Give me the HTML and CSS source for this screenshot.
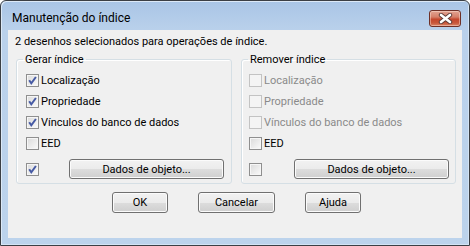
FILE: index.html
```html
<!DOCTYPE html>
<html lang="pt">
<head>
    <meta charset="UTF-8">
    <title>Manutenção do índice</title>
    <link rel="stylesheet" href="styles.css">
</head>
<body>

    <div class="window">
        <div class="titlebar">
            <span class="title">Manutenção do índice</span>
            <button class="close" title="Fechar">
                <svg width="15" height="11" viewBox="0 0 15 11">
                    <path d="M3 2 L12 9 M12 2 L3 9" stroke="#5b3a36" stroke-width="4.4" stroke-linecap="round"/>
                    <path d="M3 2 L12 9 M12 2 L3 9" stroke="#fff" stroke-width="2.6" stroke-linecap="round"/>
                </svg>
            </button>
        </div>

        <div class="client">
            <p class="info">2 desenhos selecionados para operações de índice.</p>

            <div class="groups">
                <fieldset class="group">
                    <legend>Gerar índice</legend>
                    <div class="group-body">
                        <div class="row"><span class="cb on"></span>Localização</div>
                        <div class="row"><span class="cb on"></span>Propriedade</div>
                        <div class="row"><span class="cb on"></span>Vínculos do banco de dados</div>
                        <div class="row"><span class="cb"></span>EED</div>
                        <div class="row row-data"><span class="cb on"></span><button class="btn btn-data">Dados de objeto...</button></div>
                    </div>
                </fieldset>

                <fieldset class="group group-right">
                    <legend>Remover índice</legend>
                    <div class="group-body">
                        <div class="row disabled"><span class="cb"></span>Localização</div>
                        <div class="row disabled"><span class="cb"></span>Propriedade</div>
                        <div class="row disabled"><span class="cb"></span>Vínculos do banco de dados</div>
                        <div class="row"><span class="cb"></span>EED</div>
                        <div class="row row-data"><span class="cb"></span><button class="btn btn-data">Dados de objeto...</button></div>
                    </div>
                </fieldset>
            </div>

            <div class="actions">
                <button class="btn btn-ok">OK</button>
                <button class="btn btn-cancel">Cancelar</button>
                <button class="btn btn-ok">Ajuda</button>
            </div>
        </div>
    </div>

</body>
</html>
```

FILE: styles.css
```css
* {
    box-sizing: border-box;
}

body {
    margin: 0;
    background-color: #fff;
    font-family: Roboto, 'Segoe UI', sans-serif;
    font-size: 11px;
    color: #000;
}

.window {
    width: 470px;
    height: 246px;
    display: flex;
    flex-direction: column;
    padding: 0 7px 7px;
    border: 1px solid #3b3f45;
    border-radius: 6px 6px 0 0;
    background: linear-gradient(#a9c5e6 0, #bad1eb 30px, #bcd3ec 100%);
    box-shadow: inset 1px 1px 0 #dce9f7, inset -1px -1px 0 #d3e3f4;
}

.titlebar {
    height: 29px;
    flex: none;
    display: flex;
    align-items: flex-start;
    justify-content: space-between;
}

.title {
    margin: 10px 0 0 4px;
    font-size: 12px;
    line-height: 15px;
}

.close {
    width: 32px;
    height: 17px;
    margin: 9px 1px 0 0;
    padding: 0;
    display: flex;
    align-items: center;
    justify-content: center;
    border: 1px solid #6e3027;
    border-radius: 3px;
    background: linear-gradient(#e2a392 0%, #d5806a 40%, #c4472d 55%, #c8583b 80%, #db8669 100%);
    box-shadow: inset 0 0 0 1px rgba(255, 230, 220, 0.45);
}

.client {
    flex: 1;
    background-color: #f0f0f0;
    padding: 0 0 0 8px;
}

.info {
    margin: 4px 0 0 -1px;
    line-height: 16px;
}

.groups {
    display: flex;
    gap: 9px;
    margin-top: 2px;
}

.group {
    width: 216px;
    margin: 0;
    padding: 0;
    border: 1px solid #d5dfe5;
    border-radius: 3px;
    box-shadow: inset 1px 1px 0 #fff;
}

.group-right {
    width: 215px;
}

.group legend {
    margin-left: 6px;
    padding: 0 2px;
    line-height: 15px;
}

.group-body {
    padding: 3px 0 4px 9px;
}

.group-right .group-body {
    padding-left: 7px;
}

.row {
    height: 21px;
    display: flex;
    align-items: center;
}

.row-data {
    height: 20px;
    margin-top: 5px;
}

.disabled {
    color: #8a8a8a;
}

.cb {
    width: 13px;
    height: 13px;
    flex: none;
    margin-right: 2px;
    border: 1px solid #8f8f8f;
    background: linear-gradient(135deg, #dadada, #fbfbfb);
    box-shadow: inset 0 0 0 1px #f6f6f6;
}

.cb.on {
    background: no-repeat center / 11px 11px url("data:image/svg+xml,%3Csvg xmlns='http://www.w3.org/2000/svg' viewBox='0 0 11 11'%3E%3Cpath d='M2.2 5.2 L4.3 8.3 L8.9 2' fill='none' stroke='%23465aa4' stroke-width='2'/%3E%3C/svg%3E"),
                linear-gradient(135deg, #dadada, #fbfbfb);
}

.disabled .cb {
    border-color: #c3c3c3;
    background: #f4f4f4;
    box-shadow: none;
}

.btn {
    height: 21px;
    padding: 0;
    font: inherit;
    color: #000;
    border: 1px solid #707070;
    border-radius: 3px;
    background: linear-gradient(#f2f2f2 0%, #ebebeb 50%, #dddddd 50%, #cfcfcf 100%);
    box-shadow: inset 0 0 0 1px #fbfbfb;
}

.btn-data {
    width: 155px;
    height: 20px;
    margin-left: 28px;
}

.group-right .btn-data {
    margin-left: 30px;
}

.actions {
    display: flex;
    justify-content: center;
    gap: 30px;
    margin: 8px 0 0 -5px;
}

.btn-ok {
    width: 56px;
}

.btn-cancel {
    width: 77px;
}
```
